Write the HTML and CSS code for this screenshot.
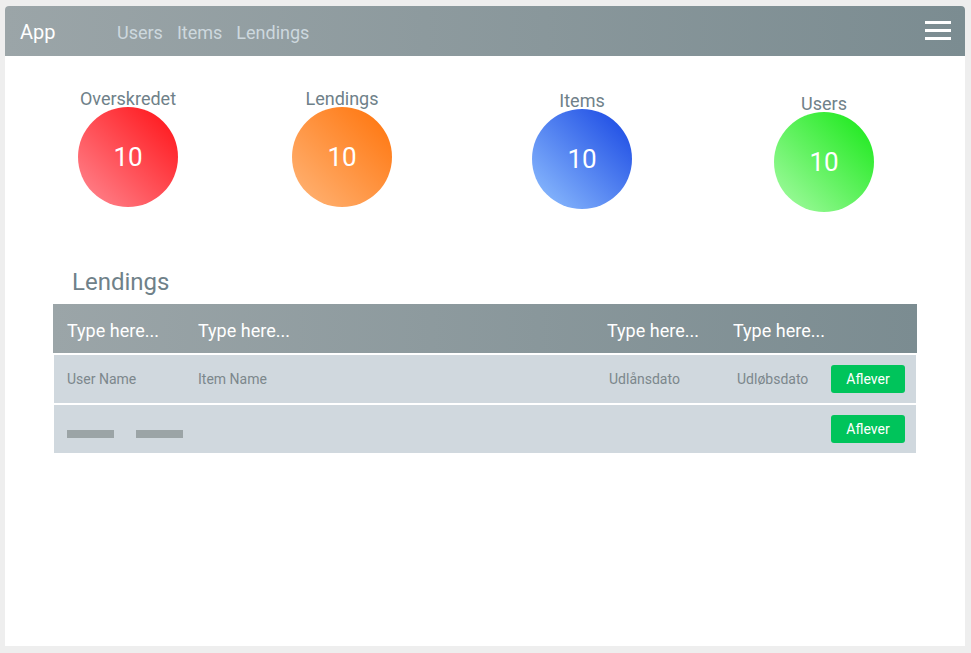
FILE: index.html
```html
<!DOCTYPE html>
<html>
<head>
<meta charset="utf-8">
<link rel="stylesheet" href="styles.css">
</head>
<body>
<div class="panel">
  <header class="topbar">
    <span class="brand">App</span>
    <nav class="nav">
      <a>Users</a>
      <a>Items</a>
      <a>Lendings</a>
    </nav>
    <div class="burger"><span></span><span></span><span></span></div>
  </header>

  <section class="stats">
    <div class="stat s1">
      <div class="stat-label">Overskredet</div>
      <div class="circle red">10</div>
    </div>
    <div class="stat s2">
      <div class="stat-label">Lendings</div>
      <div class="circle orange">10</div>
    </div>
    <div class="stat s3">
      <div class="stat-label">Items</div>
      <div class="circle blue">10</div>
    </div>
    <div class="stat s4">
      <div class="stat-label">Users</div>
      <div class="circle green">10</div>
    </div>
  </section>

  <section class="lendings">
    <h2 class="title">Lendings</h2>
    <div class="table">
      <div class="thead">
        <span class="c1">Type here...</span>
        <span class="c2">Type here...</span>
        <span class="c3">Type here...</span>
        <span class="c4">Type here...</span>
        <span class="c5"></span>
      </div>
      <div class="row">
        <span class="c1">User Name</span>
        <span class="c2">Item Name</span>
        <span class="c3 d">Udlånsdato</span>
        <span class="c4 d">Udløbsdato</span>
        <span class="c5"><button class="btn">Aflever</button></span>
      </div>
      <div class="row">
        <span class="c1"><i class="ph"></i></span>
        <span class="c2 ph2"><i class="ph"></i></span>
        <span class="c3"></span>
        <span class="c4"></span>
        <span class="c5"><button class="btn">Aflever</button></span>
      </div>
    </div>
  </section>
</div>
</body>
</html>
```

FILE: styles.css
```css
* { box-sizing: border-box; }
html, body { margin: 0; padding: 0; }
body {
  background: #eeeeee;
  font-family: Roboto, "Liberation Sans", sans-serif;
  padding: 6px 6px 7px 5px;
  height: 653px;
}
.panel {
  background: #ffffff;
  height: 640px;
  border-radius: 4px 4px 0 0;
}
.topbar {
  height: 50px;
  display: flex;
  align-items: center;
  padding: 0 14px 0 15px;
  border-radius: 4px 4px 0 0;
  background: linear-gradient(to right, #9ba5a8, #7b8c91);
}
.brand {
  color: #ffffff;
  font-size: 20px;
  width: 97px;
  margin-top: 2px;
}
.nav { display: flex; gap: 14px; flex: 1; margin-top: 2px; }
.nav a {
  color: #cdd8de;
  font-size: 18px;
}
.burger {
  display: flex;
  flex-direction: column;
  gap: 5px;
  width: 26px;
  margin-top: -2px;
}
.burger span {
  display: block;
  height: 3px;
  background: #ffffff;
}
.stats {
  display: flex;
  align-items: flex-start;
  padding-top: 32px;
  height: 211px;
}
.stat {
  width: 100px;
  display: flex;
  flex-direction: column;
  align-items: center;
}
.s1 { margin-left: 73px; }
.s2 { margin-left: 114px; }
.s3 { margin-left: 140px; margin-top: 2px; }
.s4 { margin-left: 142px; margin-top: 5px; }
.stat-label {
  color: #6f8189;
  font-size: 18px;
  line-height: 21px;
  white-space: nowrap;
}
.circle {
  width: 100px;
  height: 100px;
  border-radius: 50%;
  display: flex;
  align-items: center;
  justify-content: center;
  color: #ffffff;
  font-size: 26px;
  margin-top: -2px;
}
.red { background: linear-gradient(to bottom left, #ff0f14, #ff8a93); }
.orange { background: linear-gradient(to bottom left, #ff7208, #ffb67a); }
.blue { background: linear-gradient(to bottom left, #1443e2, #92c2ff); }
.green { background: linear-gradient(to bottom left, #14e814, #a8fba6); }

.lendings { padding: 0 48px 0 48px; }
.title {
  margin: 0 0 7px 19px;
  font-weight: normal;
  font-size: 24px;
  line-height: 30px;
  color: #6f8189;
}
.thead, .row {
  display: grid;
  grid-template-columns: 131px 409px 126px 98px 1fr;
  align-items: center;
}
.thead {
  background: linear-gradient(to right, #9ba5a8, #7b8c91);
  color: #ffffff;
  font-size: 18px;
  padding-left: 14px;
  padding-top: 3px;
  border-bottom: 2px solid #ffffff;
  height: 51px;
}
.row {
  background: #d0d8de;
  margin: 0 1px 2px 1px;
  height: 48px;
  font-size: 14px;
  color: #7c878c;
  padding-left: 13px;
}
.row .d { padding-left: 2px; }
.row .c4.d { padding-left: 4px; }
.ph {
  display: inline-block;
  width: 47px;
  height: 8px;
  background: #9ba4a6;
  vertical-align: middle;
  margin-top: 8px;
}
.ph2 { padding-left: 1px; margin-left: -63px; }
.c5 { display: flex; justify-content: flex-end; padding-right: 11px; }
.btn {
  border: none;
  background: #00c45b;
  color: #ffffff;
  font-family: Roboto, "Liberation Sans", sans-serif;
  font-size: 14px;
  width: 74px;
  height: 28px;
  border-radius: 3px;
  padding: 0;
}
```
